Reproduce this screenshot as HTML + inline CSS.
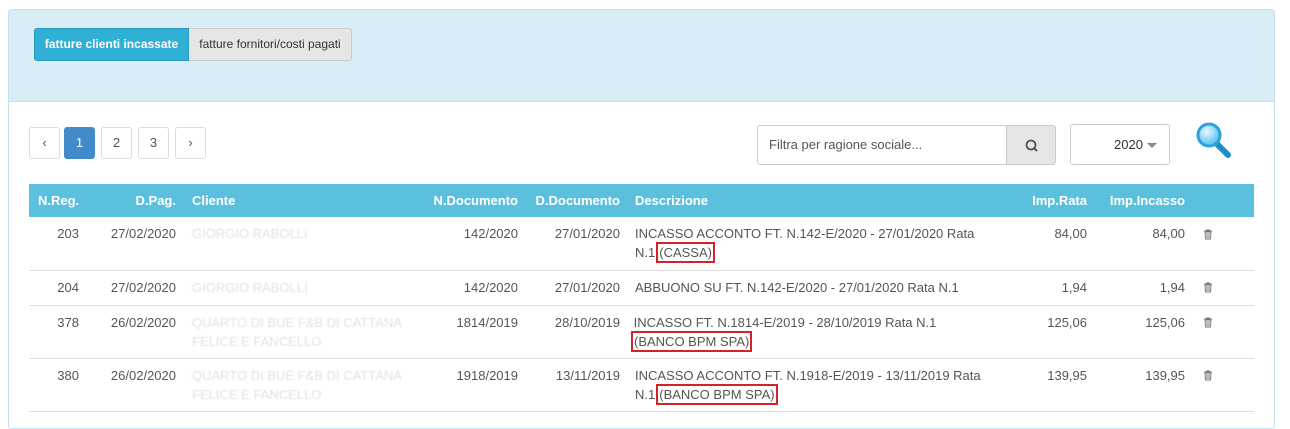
<!DOCTYPE html>
<html><head><meta charset="utf-8"><style>
*{box-sizing:border-box;margin:0;padding:0}
body{width:1290px;height:415px;background:#fff;font-family:"Liberation Sans",Arial,sans-serif;font-size:13px;color:#555;position:relative;overflow:hidden}
.a{position:absolute;white-space:nowrap}
.panel{position:absolute;left:8px;top:9px;width:1267px;height:420px;border:1px solid #c6e2ef;border-radius:3px}
.hd{position:absolute;left:9px;top:10px;width:1265px;height:92px;background:#d9edf7;border-bottom:1px solid #c6e2ef}
.btn1{left:34px;top:28px;width:155px;height:33px;background:#31b0d5;border:1px solid #269abc;border-radius:3px 0 0 3px;color:#fff;font-weight:bold;line-height:31px;text-align:center;font-size:12px}
.btn2{left:189px;top:28px;width:163px;height:33px;background:#e6e6e6;border:1px solid #ccc;border-left:none;border-radius:0 3px 3px 0;color:#333;line-height:31px;text-align:center;font-size:12px}
.pg{top:127px;width:31px;height:32px;border:1px solid #ddd;border-radius:3px;text-align:center;line-height:30px;color:#555;font-size:13px}
.th{position:absolute;left:29px;top:184px;width:1225px;height:33px;background:#5bc0de}
.h{color:#fff;font-weight:bold;top:193px}
.r{text-align:right}
.line{position:absolute;left:29px;width:1225px;height:1px;background:#ddd}
.cl{color:#e2e2e2;filter:blur(0.5px)}
.box{border:2px solid #d2232a;padding:1px 1px;margin-left:1px}
</style></head><body>
<div class="panel"></div>
<div class="hd"></div>
<div class="a btn1">fatture clienti incassate</div>
<div class="a btn2">fatture fornitori/costi pagati</div>
<div class="a pg" style="left:29px">‹</div>
<div class="a pg" style="left:64px;background:#428bca;border-color:#428bca;color:#fff">1</div>
<div class="a pg" style="left:101px">2</div>
<div class="a pg" style="left:138px">3</div>
<div class="a pg" style="left:175px">›</div>
<div class="a" style="left:757px;top:125px;width:250px;height:40px;border:1px solid #ccc;border-radius:3px 0 0 3px;line-height:38px;padding-left:11px;color:#555">Filtra per ragione sociale...</div>
<div class="a" style="left:1006px;top:125px;width:50px;height:40px;border:1px solid #ccc;background:#e6e6e6;border-radius:0 3px 3px 0">
<svg width="50" height="40"><circle cx="24" cy="19" r="4.5" fill="none" stroke="#555" stroke-width="1.8"/><line x1="27.3" y1="22.3" x2="30" y2="25" stroke="#555" stroke-width="2"/></svg></div>
<div class="a" style="left:1070px;top:124px;width:100px;height:41px;border:1px solid #ccc;border-radius:3px;line-height:39px;padding-left:43px;color:#333;font-size:13px">2020 <span style="display:inline-block;width:0;height:0;border-left:5px solid transparent;border-right:5px solid transparent;border-top:5px solid #888;vertical-align:middle"></span></div>
<svg class="a" style="left:1194px;top:120px" width="42" height="42"><defs><radialGradient id="g" cx="40%" cy="35%" r="60%"><stop offset="0" stop-color="#e8f8ff"/><stop offset="1" stop-color="#5fc3ee"/></radialGradient></defs><line x1="21" y1="22" x2="34" y2="35" stroke="#1d8fc6" stroke-width="6" stroke-linecap="round"/><circle cx="15" cy="15" r="11" fill="url(#g)" stroke="#2aa3dc" stroke-width="3"/></svg>
<div class="th"></div>
<div class="a h" style="left:38px">N.Reg.</div>
<div class="a h r" style="left:100px;width:76px">D.Pag.</div>
<div class="a h" style="left:192px">Cliente</div>
<div class="a h r" style="left:400px;width:118px">N.Documento</div>
<div class="a h r" style="left:520px;width:100px">D.Documento</div>
<div class="a h" style="left:635px">Descrizione</div>
<div class="a h r" style="left:990px;width:97px">Imp.Rata</div>
<div class="a h r" style="left:1080px;width:105px">Imp.Incasso</div>

<!-- row1 -->
<div class="a r" style="left:40px;width:39px;top:226px">203</div>
<div class="a r" style="left:100px;width:76px;top:226px">27/02/2020</div>
<div class="a cl" style="left:192px;top:226px">GIORGIO RABOLLI</div>
<div class="a r" style="left:400px;width:118px;top:226px">142/2020</div>
<div class="a r" style="left:520px;width:100px;top:226px">27/01/2020</div>
<div class="a" style="left:635px;top:224px;line-height:19px">INCASSO ACCONTO FT. N.142-E/2020 - 27/01/2020 Rata<br>N.1<span class="box">(CASSA)</span></div>
<div class="a r" style="left:990px;width:97px;top:226px">84,00</div>
<div class="a r" style="left:1090px;width:95px;top:226px">84,00</div>
<div class="line" style="top:270px"></div>
<!-- row2 -->
<div class="a r" style="left:40px;width:39px;top:280px">204</div>
<div class="a r" style="left:100px;width:76px;top:280px">27/02/2020</div>
<div class="a cl" style="left:192px;top:280px">GIORGIO RABOLLI</div>
<div class="a r" style="left:400px;width:118px;top:280px">142/2020</div>
<div class="a r" style="left:520px;width:100px;top:280px">27/01/2020</div>
<div class="a" style="left:635px;top:280px">ABBUONO SU FT. N.142-E/2020 - 27/01/2020 Rata N.1</div>
<div class="a r" style="left:990px;width:97px;top:280px">1,94</div>
<div class="a r" style="left:1090px;width:95px;top:280px">1,94</div>
<div class="line" style="top:305px"></div>
<!-- row3 -->
<div class="a r" style="left:40px;width:39px;top:315px">378</div>
<div class="a r" style="left:100px;width:76px;top:315px">26/02/2020</div>
<div class="a cl" style="left:192px;top:313px;line-height:19px">QUARTO DI BUE F&amp;B DI CATTANA<br>FELICE E FANCELLO</div>
<div class="a r" style="left:400px;width:118px;top:315px">1814/2019</div>
<div class="a r" style="left:520px;width:100px;top:315px">28/10/2019</div>
<div class="a" style="left:630px;top:313px;line-height:19px">&nbsp;INCASSO FT. N.1814-E/2019 - 28/10/2019 Rata N.1<br><span class="box">(BANCO BPM SPA)</span></div>
<div class="a r" style="left:990px;width:97px;top:315px">125,06</div>
<div class="a r" style="left:1090px;width:95px;top:315px">125,06</div>
<div class="line" style="top:358px"></div>
<!-- row4 -->
<div class="a r" style="left:40px;width:39px;top:368px">380</div>
<div class="a r" style="left:100px;width:76px;top:368px">26/02/2020</div>
<div class="a cl" style="left:192px;top:366px;line-height:19px">QUARTO DI BUE F&amp;B DI CATTANA<br>FELICE E FANCELLO</div>
<div class="a r" style="left:400px;width:118px;top:368px">1918/2019</div>
<div class="a r" style="left:520px;width:100px;top:368px">13/11/2019</div>
<div class="a" style="left:635px;top:366px;line-height:19px">INCASSO ACCONTO FT. N.1918-E/2019 - 13/11/2019 Rata<br>N.1<span class="box">(BANCO BPM SPA)</span></div>
<div class="a r" style="left:990px;width:97px;top:368px">139,95</div>
<div class="a r" style="left:1090px;width:95px;top:368px">139,95</div>
<div class="line" style="top:411px"></div>

<svg class="a" style="left:1203px;top:229px" width="10" height="11"><path d="M1 2h8M3.5 2V1h3v1M2 3h6l-.5 7h-5z" fill="none" stroke="#777" stroke-width="1"/><path d="M4 4v5M6 4v5" stroke="#777"/></svg>
<svg class="a" style="left:1203px;top:282px" width="10" height="11"><path d="M1 2h8M3.5 2V1h3v1M2 3h6l-.5 7h-5z" fill="none" stroke="#777" stroke-width="1"/><path d="M4 4v5M6 4v5" stroke="#777"/></svg>
<svg class="a" style="left:1203px;top:317px" width="10" height="11"><path d="M1 2h8M3.5 2V1h3v1M2 3h6l-.5 7h-5z" fill="none" stroke="#777" stroke-width="1"/><path d="M4 4v5M6 4v5" stroke="#777"/></svg>
<svg class="a" style="left:1203px;top:370px" width="10" height="11"><path d="M1 2h8M3.5 2V1h3v1M2 3h6l-.5 7h-5z" fill="none" stroke="#777" stroke-width="1"/><path d="M4 4v5M6 4v5" stroke="#777"/></svg>
</body></html>
